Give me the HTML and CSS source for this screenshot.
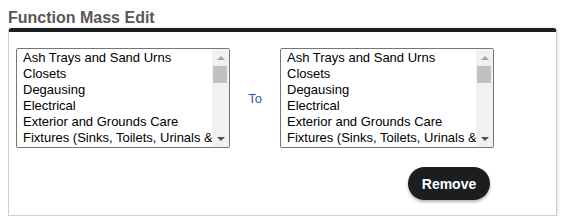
FILE: index.html
```html
<!DOCTYPE html>
<html lang="en">
<head>
  <meta charset="UTF-8">
  <title>Function Mass Edit</title>
  <link rel="stylesheet" href="styles.css">
</head>
<body>
  <h1 class="page-title">Function Mass Edit</h1>

  <div class="card">
    <div class="transfer">
      <div class="listbox">
        <ul class="options">
          <li>Ash Trays and Sand Urns</li>
          <li>Closets</li>
          <li>Degausing</li>
          <li>Electrical</li>
          <li>Exterior and Grounds Care</li>
          <li>Fixtures (Sinks, Toilets, Urinals &amp; Showers)</li>
        </ul>
        <div class="scrollbar">
          <span class="arrow arrow-up"></span>
          <span class="thumb"></span>
          <span class="track"></span>
          <span class="arrow arrow-down"></span>
        </div>
      </div>

      <span class="to-label">To</span>

      <div class="listbox">
        <ul class="options">
          <li>Ash Trays and Sand Urns</li>
          <li>Closets</li>
          <li>Degausing</li>
          <li>Electrical</li>
          <li>Exterior and Grounds Care</li>
          <li>Fixtures (Sinks, Toilets, Urinals &amp; Showers)</li>
        </ul>
        <div class="scrollbar">
          <span class="arrow arrow-up"></span>
          <span class="thumb"></span>
          <span class="track"></span>
          <span class="arrow arrow-down"></span>
        </div>
      </div>
    </div>

    <div class="actions">
      <button class="btn-remove">Remove</button>
    </div>
  </div>
</body>
</html>
```

FILE: styles.css
```css
body {
  font-family: 'Liberation Sans', Arial, sans-serif;
  background-color: #ffffff;
  color: #000;
  margin: 8px;
}

.page-title {
  font-size: 16px;
  line-height: 20px;
  font-weight: bold;
  color: #575757;
  margin: 0;
}

.card {
  margin-top: 0;
  margin-right: 3px;
  border: 1px solid #cfcfcf;
  border-top: 4px solid #1c1f22;
  border-radius: 4px 4px 0 0;
  padding: 16px 7px 15px;
  box-shadow: 0 1px 4px rgba(0, 0, 0, 0.18);
}

.transfer {
  display: flex;
  align-items: center;
}

.to-label {
  width: 50px;
  text-align: center;
  font-size: 13px;
  color: #2460a7;
}

/* Listbox with a classic scrollbar */
.listbox {
  display: flex;
  width: 214px;
  height: 100px;
  box-sizing: border-box;
  border: 1px solid #767676;
  border-radius: 2px;
  overflow: hidden;
  background-color: #fff;
}

.options {
  flex: 1;
  min-width: 0;
  list-style: none;
  margin: 0;
  padding: 1px 0 0 6px;
  font-size: 13px;
  line-height: 16px;
}

.options li {
  white-space: nowrap;
  overflow: hidden;
}

.scrollbar {
  width: 17px;
  display: flex;
  flex-direction: column;
  background-color: #f1f1f1;
}

.arrow {
  height: 17px;
  display: flex;
  align-items: center;
  justify-content: center;
}

.arrow::before {
  content: "";
  border-left: 4px solid transparent;
  border-right: 4px solid transparent;
}

.arrow-up::before {
  border-bottom: 4px solid #a3a3a3;
}

.arrow-down::before {
  border-top: 4px solid #505050;
}

.thumb {
  height: 17px;
  margin: 0 2px 0 1px;
  background-color: #c1c1c1;
}

.track {
  flex: 1;
}

.actions {
  display: flex;
  justify-content: flex-end;
  width: 474px;
  margin-top: 19px;
}

.btn-remove {
  width: 82px;
  height: 33px;
  border: none;
  border-radius: 17px;
  background-color: #1b1e21;
  color: #fff;
  font-family: 'Liberation Sans', Arial, sans-serif;
  font-size: 14px;
  font-weight: bold;
  cursor: pointer;
  box-shadow: 0 2px 3px rgba(0, 0, 0, 0.3);
}
```
